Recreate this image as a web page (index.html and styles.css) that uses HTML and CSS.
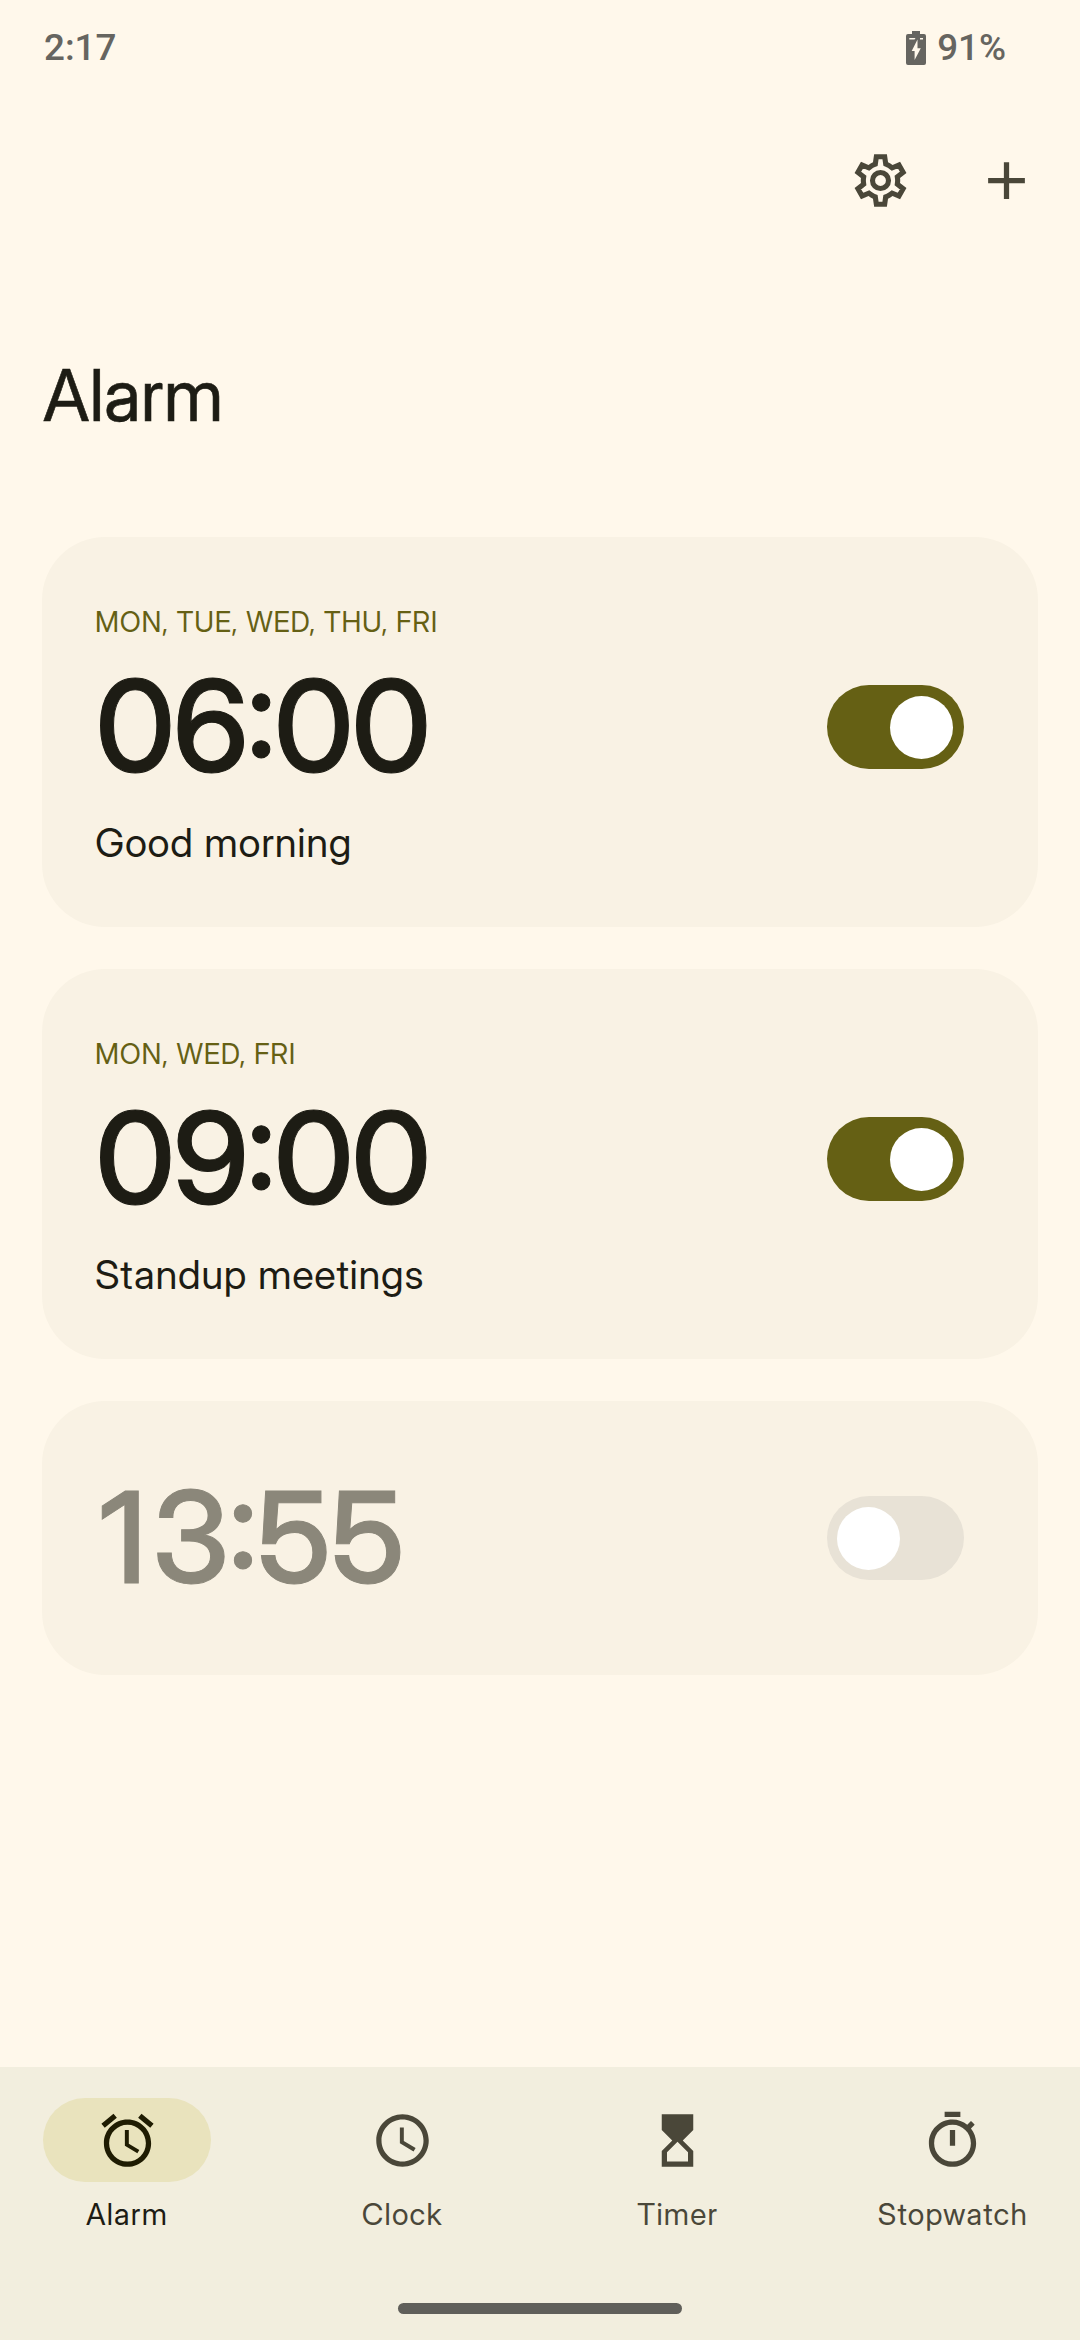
FILE: index.html
```
<!DOCTYPE html>
<html lang="en">
<head>
<meta charset="utf-8">
<title>Alarm</title>
<link rel="stylesheet" href="styles.css">
</head>
<body>
<div class="screen">
  <header class="status-bar">
    <span class="status-time">2:17</span>
    <span class="status-battery">
      <svg class="battery" viewBox="0 0 20 34"><path fill="currentColor" fill-rule="evenodd" d="M6 0h8v3h4a2 2 0 0 1 2 2v27a2 2 0 0 1-2 2H2a2 2 0 0 1-2-2V5a2 2 0 0 1 2-2h4zM3.300 7v1.600h5.200L9.500 7zM14 7v1.600h3V7zM11.500 8.500L5.700 20H8.600V29L14.800 17.300H11.500z"/></svg>
      <span>91%</span>
    </span>
  </header>
  <div class="toolbar">
    <svg class="icon" viewBox="0 0 24 24" fill="none" stroke="currentColor">
      <defs><path id="gear" d="M19.440 12.990c.04-.33.07-.65.07-.99s-.03-.66-.07-.97l2.450-1.920-2.430-4.220-2.870 1.160c-.52-.4-1.090-.74-1.710-1L14.440 2H9.570l-.44 3.070c-.62.26-1.190.6-1.710 1L4.560 4.890 2.120 9.110l2.440 1.920c-.04.31-.07.63-.07.97s.03.66.07.99l-2.430 1.910 2.430 4.200 2.880-1.150c.53.41 1.080.73 1.690.98L9.580 22h4.850l.44-3.070c.62-.26 1.180-.57 1.710-.98l2.880 1.150 2.430-4.200z"/><clipPath id="gear-clip"><use href="#gear"/></clipPath></defs>
      <use href="#gear" stroke-width="3.900" clip-path="url(#gear-clip)"/>
      <circle cx="12" cy="12" r="3.050" stroke-width="1.950"/>
    </svg>
    <svg class="icon" viewBox="0 0 24 24"><path fill="currentColor" d="M19 13h-6v6h-2v-6H5v-2h6V5h2v6h6z"/></svg>
  </div>
  <h1 class="title">Alarm</h1>
  <main class="alarms">
    <section class="card">
      <p class="days">MON, TUE, WED, THU, FRI</p>
      <div class="row"><span class="time">06:00</span><span class="switch on"><span class="thumb"></span></span></div>
      <p class="label">Good morning</p>
    </section>
    <section class="card">
      <p class="days">MON, WED, FRI</p>
      <div class="row"><span class="time">09:00</span><span class="switch on"><span class="thumb"></span></span></div>
      <p class="label">Standup meetings</p>
    </section>
    <section class="card off">
      <div class="row"><span class="time"><span class="one">1</span>3:55</span><span class="switch"><span class="thumb"></span></span></div>
    </section>
  </main>
  <nav class="bottom">
    <div class="tabs">
      <div class="tab active"><span class="pill"><svg class="icon" viewBox="0 0 24 24"><path fill="currentColor" d="M12.500 8H11v6l4.750 2.850.75-1.230-4-2.370zm4.837-6.190l4.607 3.845-1.280 1.535-4.610-3.843zm-10.674 0l1.282 1.536L3.337 7.190l-1.280-1.536zM12 4c-4.970 0-9 4.030-9 9s4.030 9 9 9 9-4.030 9-9-4.030-9-9-9zm0 16c-3.860 0-7-3.140-7-7s3.140-7 7-7 7 3.140 7 7-3.140 7-7 7z"/></svg></span><span>Alarm</span></div>
      <div class="tab"><span class="pill"><svg class="icon" viewBox="0 0 24 24"><path fill="currentColor" d="M12 2C6.500 2 2 6.500 2 12s4.500 10 10 10 10-4.500 10-10S17.500 2 12 2zm0 18c-4.410 0-8-3.590-8-8s3.590-8 8-8 8 3.590 8 8-3.590 8-8 8zm.5-13H11v6l5.200 3.200.8-1.300-4.500-2.700z"/></svg></span><span>Clock</span></div>
      <div class="tab"><span class="pill"><svg class="icon" viewBox="0 0 24 24"><path fill="currentColor" d="M6 2v6l4 4-4 4v6h12v-6l-4-4 4-4V2zm10 14.500V20H8v-3.500l4-4z"/></svg></span><span>Timer</span></div>
      <div class="tab"><span class="pill"><svg class="icon" viewBox="0 0 24 24"><path fill="currentColor" d="M15 1H9v2h6zm-4 13h2V8h-2zm8.030-6.610l1.420-1.420c-.43-.51-.9-.99-1.410-1.410l-1.420 1.420C16.070 4.740 14.120 4 12 4c-4.970 0-9 4.030-9 9s4.020 9 9 9 9-4.030 9-9c0-2.120-.74-4.070-1.970-5.610zM12 20c-3.870 0-7-3.130-7-7s3.130-7 7-7 7 3.130 7 7-3.130 7-7 7z"/></svg></span><span>Stopwatch</span></div>
    </div>
    <div class="home-bar"></div>
  </nav>
</div>
</body>
</html>
```
FILE: styles.css
```
* { box-sizing: border-box; margin: 0; }
body { background: #fff8eb; color: #1d1c14; font-family: "Inter Display", Inter, "Liberation Sans", sans-serif; }
.screen { width: 1080px; height: 2340px; display: flex; flex-direction: column; }
.icon { width: 63px; height: 63px; display: block; }
.status-bar { height: 93px; padding: 26px 74px 0 44px; display: flex; justify-content: space-between; font: 500 36.75px/43px Roboto, sans-serif; color: #666560; }
.status-battery { display: flex; gap: 11px; }
.battery { width: 20px; height: 34px; margin-top: 5px; }
.toolbar { height: 175px; padding-right: 42px; display: flex; justify-content: flex-end; align-items: center; gap: 63px; color: #4a4739; }
.title { margin: 84px 0 99px 43px; font-size: 71px; line-height: 86px; font-weight: 400; -webkit-text-stroke: 0.6px currentColor; }
.alarms { flex: 1; padding: 0 42px; display: flex; flex-direction: column; gap: 42px; }
.card { height: 390px; padding: 68px 74px 0 53px; border-radius: 63px; background: #f9f2e4; }
.card.off { height: 274px; padding-top: 59px; }
.days { font-size: 28px; line-height: 34px; letter-spacing: 0.7px; color: #656014; }
.row { display: flex; align-items: center; justify-content: space-between; }
.days + .row { margin-top: 10px; }
.time { margin: 0 0 2px 0.5px; font-size: 127px; line-height: 154px; font-weight: 500; letter-spacing: -1.85px; font-feature-settings: "calt" 1; -webkit-text-stroke: 1px currentColor; }
.off .time { color: #8b877a; letter-spacing: -0.5px; }
.one { margin-left: 4px; letter-spacing: 5.5px; }
.label { margin-top: 14px; font-size: 40px; line-height: 48px; letter-spacing: 0.7px; }
.switch { width: 137px; height: 84px; padding: 0 10px; border-radius: 42px; background: #e8e2d6; display: flex; align-items: center; }
.switch.on { background: #656014; justify-content: flex-end; padding-right: 11px; }
.thumb { width: 63px; height: 63px; border-radius: 50%; background: #fff; }
.bottom { height: 273px; padding-top: 31px; background: #f2eede; display: flex; flex-direction: column; align-items: center; }
.tabs { width: 994px; display: flex; justify-content: space-between; }
.tab { width: 168px; display: flex; flex-direction: column; align-items: center; gap: 14px; font-size: 30px; line-height: 36px; letter-spacing: 1.2px; color: #4a4739; }
.tab.active { color: #1d1c14; }
.pill { width: 168px; height: 84px; border-radius: 42px; display: flex; align-items: center; justify-content: center; }
.active .pill { background: #e9e3bd; color: #1f1c02; }
.home-bar { width: 284px; height: 11px; margin-top: 71px; border-radius: 5.5px; background: #605f5a; }
```
